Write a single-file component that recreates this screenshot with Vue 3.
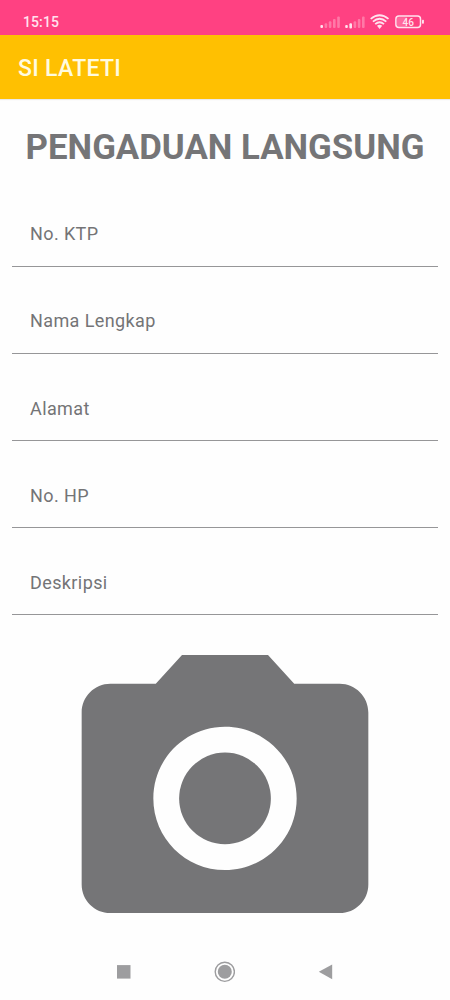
<script setup>
const fields = ['No. KTP', 'Nama Lengkap', 'Alamat', 'No. HP', 'Deskripsi']
const bars = [3, 4.8, 6.8, 9, 11.5]
</script>

<template>
  <div class="screen">
    <header class="status">
      <span class="clock">15:15</span>
      <svg class="indicators" width="106" height="16" viewBox="0 0 106 16">
        <g fill="#ffe3ee">
          <rect v-for="(h, i) in bars" :key="'a' + i" :x="0.4 + i * 4.2" :y="14 - h" width="2.6" :height="h" rx="1" :opacity="i < 1 ? 1 : 0.35" />
          <rect v-for="(h, i) in bars" :key="'b' + i" :x="25.2 + i * 4.2" :y="14 - h" width="2.6" :height="i === 1 ? 5.2 : h" rx="1" :opacity="i < 2 ? 1 : 0.35" />
        </g>
        <g fill="none" stroke="#ffe3ee" stroke-width="1.8">
          <path d="M50.7 4.9 Q59.6 -2.3 68.5 4.9" />
          <path d="M52.9 7.6 Q59.6 1.9 66.3 7.6" />
          <path d="M55.2 10.2 Q59.6 6.2 64 10.2" />
        </g>
        <path d="M57 11.8 Q59.6 9.6 62.2 11.8 L59.6 15 Z" fill="#ffe3ee" />
        <rect x="77" y="3.2" width="10" height="9.6" fill="#ffe3ee" opacity=".25" />
        <rect x="75.9" y="2" width="24.6" height="11.4" rx="3" fill="none" stroke="#ffe3ee" stroke-width="1.5" />
        <rect x="102" y="5.8" width="1.9" height="4" rx=".7" fill="#ffe3ee" />
        <text x="88.3" y="11.5" text-anchor="middle" class="level">46</text>
      </svg>
    </header>
    <div class="appbar">SI LATETI</div>
    <main>
      <h1>PENGADUAN LANGSUNG</h1>
      <div v-for="f in fields" :key="f" class="field"><span>{{ f }}</span></div>
      <svg class="camera" viewBox="0 -0.03 24 24" fill="#757577">
        <circle cx="12" cy="12" r="3.2" />
        <path d="M9 2L7.17 4H4c-1.1 0-2 .9-2 2v12c0 1.1.9 2 2 2h16c1.1 0 2-.9 2-2V6c0-1.1-.9-2-2-2h-3.17L15 2H9zm3 15c-2.76 0-5-2.24-5-5s2.24-5 5-5 5 2.24 5 5-2.24 5-5 5z" />
      </svg>
    </main>
    <nav>
      <svg width="22" height="22"><rect x="4" y="4.1" width="13.5" height="13.5" fill="#9d9d9f" /></svg>
      <svg width="22" height="22"><circle cx="11.8" cy="10.8" r="9.6" fill="none" stroke="#9d9d9f" stroke-width="1.4" /><circle cx="11.8" cy="10.8" r="7" fill="#9d9d9f" /></svg>
      <svg width="22" height="22"><path d="M4.8 10.8 L18.2 3.4 V18.2 Z" fill="#9d9d9f" /></svg>
    </nav>
  </div>
</template>

<style>
body { background: #fefefe; }
</style>

<style scoped>
.screen {
  width: 450px;
  height: 1000px;
  overflow: hidden;
  display: flex;
  flex-direction: column;
  font-family: Roboto, sans-serif;
  background: #fefefe;
}
.status {
  flex: none;
  height: 35px;
  box-sizing: border-box;
  padding: 14px 24px 0 23px;
  display: flex;
  justify-content: space-between;
  background: #ff4182;
}
.clock {
  font-size: 14px;
  line-height: 16px;
  font-weight: 500;
  letter-spacing: 0.1px;
  color: #ffe3ee;
}
.level { font: 500 10px Roboto, sans-serif; fill: #ffe3ee; }
.appbar {
  flex: none;
  height: 64px;
  box-sizing: border-box;
  padding: 2px 0 0 18px;
  line-height: 64px;
  font-size: 23px;
  font-weight: 500;
  letter-spacing: 0.3px;
  color: #fffbe0;
  background: #ffc001;
  box-shadow: 0 1px 1px rgba(0, 0, 0, 0.08);
}
main { flex: none; height: 862px; display: flex; flex-direction: column; }
h1 {
  margin: 27px 0 12px;
  line-height: 42px;
  font-size: 34.8px;
  font-weight: 700;
  text-align: center;
  white-space: nowrap;
  color: #757577;
}
.field {
  flex: none;
  height: 87.1px;
  box-sizing: border-box;
  margin: 0 12px;
  padding: 42.4px 18px 0;
  border-bottom: 1px solid #969698;
  font-size: 18px;
  line-height: 24px;
  letter-spacing: 0.4px;
  color: #747476;
}
.camera { width: 344px; height: 344px; margin: 11px 0 0 52.6px; flex: none; }
nav { flex: none; height: 39px; display: flex; gap: 78.5px; padding-left: 112.5px; }
</style>
